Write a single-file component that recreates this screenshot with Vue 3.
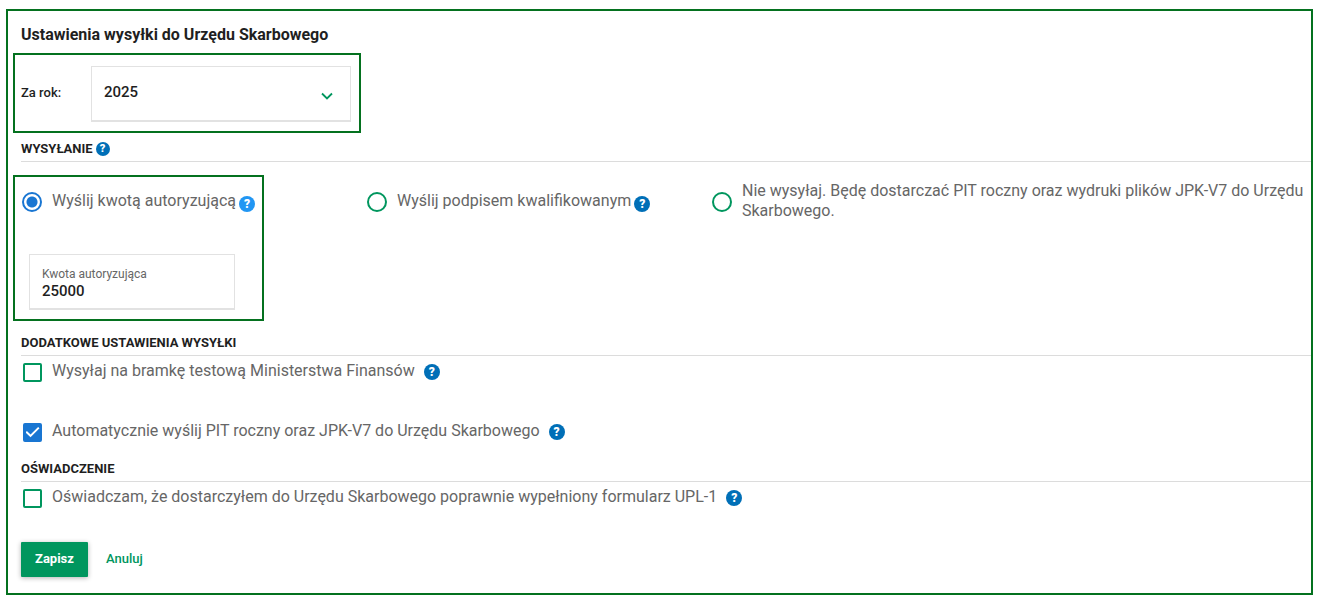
<script setup>
import { ref } from 'vue'

const year = ref('2025')
const years = ['2025', '2024', '2023']
const method = ref('amount')
const amount = ref('25000')
const testGate = ref(false)
const autoSend = ref(true)
const statement = ref(false)
</script>

<template>
  <form class="panel" @submit.prevent>
    <h1 class="title">Ustawienia wysyłki do Urzędu Skarbowego</h1>

    <div class="year framed">
      <label class="year-label" for="year">Za rok:</label>
      <div class="select-wrap">
        <select id="year" v-model="year" class="select">
          <option v-for="y in years" :key="y">{{ y }}</option>
        </select>
        <svg class="chevron" viewBox="0 0 12 8" aria-hidden="true"><path d="M1 1.5l5 5 5-5" fill="none" stroke="#00965e" stroke-width="1.8" /></svg>
      </div>
    </div>

    <h2 class="section">
      WYSYŁANIE
      <button type="button" class="help small" aria-label="Pomoc"><b>?</b></button>
    </h2>

    <div class="methods">
      <div class="method framed">
        <div class="option">
          <input id="m1" v-model="method" class="radio" type="radio" name="method" value="amount" />
          <label for="m1">Wyślij kwotą autoryzującą</label>
          <button type="button" class="help lower light" aria-label="Pomoc"><b>?</b></button>
        </div>
        <div class="field">
          <label class="field-label" for="amount">Kwota autoryzująca</label>
          <input id="amount" v-model="amount" class="field-input" type="text" />
        </div>
      </div>
      <div class="method">
        <div class="option">
          <input id="m2" v-model="method" class="radio" type="radio" name="method" value="signature" />
          <label for="m2">Wyślij podpisem kwalifikowanym</label>
          <button type="button" class="help lower" aria-label="Pomoc"><b>?</b></button>
        </div>
      </div>
      <div class="method">
        <div class="option">
          <input id="m3" v-model="method" class="radio" type="radio" name="method" value="none" />
          <label for="m3">Nie wysyłaj. Będę dostarczać PIT roczny oraz wydruki plików JPK-V7 do Urzędu Skarbowego.</label>
        </div>
      </div>
    </div>

    <h2 class="section spaced">DODATKOWE USTAWIENIA WYSYŁKI</h2>
    <div class="checks">
      <div class="check-row">
        <input id="c1" v-model="testGate" class="check" type="checkbox" />
        <label for="c1">Wysyłaj na bramkę testową Ministerstwa Finansów</label>
        <button type="button" class="help" aria-label="Pomoc"><b>?</b></button>
      </div>
      <div class="check-row">
        <input id="c2" v-model="autoSend" class="check" type="checkbox" />
        <label for="c2">Automatycznie wyślij PIT roczny oraz JPK-V7 do Urzędu Skarbowego</label>
        <button type="button" class="help" aria-label="Pomoc"><b>?</b></button>
      </div>
    </div>

    <h2 class="section spaced">OŚWIADCZENIE</h2>
    <div class="checks">
      <div class="check-row">
        <input id="c3" v-model="statement" class="check" type="checkbox" />
        <label for="c3">Oświadczam, że dostarczyłem do Urzędu Skarbowego poprawnie wypełniony formularz UPL-1</label>
        <button type="button" class="help" aria-label="Pomoc"><b>?</b></button>
      </div>
    </div>

    <div class="actions">
      <button type="submit" class="save">Zapisz</button>
      <button type="button" class="cancel">Anuluj</button>
    </div>
  </form>
</template>

<style>
body {
  margin: 0;
  background: #fff;
}
#app {
  display: flow-root;
}
</style>

<style scoped>
* {
  box-sizing: border-box;
}
.panel {
  margin: 9px 7px 7px 6px;
  padding: 14px 0 16px 5px;
  border: 2px solid #04711f;
  font-family: Roboto, "Liberation Sans", sans-serif;
  font-size: 16px;
  line-height: 20px;
  color: #1f1f1f;
}
button,
input,
select {
  font-family: inherit;
}
.title {
  margin: 0 0 8px 8px;
  font-size: 16px;
  font-weight: 700;
}
.framed {
  border: 2px solid #04711f;
}
.year {
  display: flex;
  align-items: center;
  width: fit-content;
  height: 80px;
  padding: 1px 8px 0 6px;
}
.year-label {
  width: 70px;
  padding-bottom: 2px;
  font-size: 13px;
  font-weight: 500;
}
.select-wrap {
  position: relative;
  width: 260px;
}
.select {
  display: block;
  appearance: none;
  width: 100%;
  height: 56px;
  padding: 0 40px 2px 12px;
  border: 1px solid #e2e2e2;
  border-bottom-width: 2px;
  border-radius: 0;
  background: #fff;
  color: #1f1f1f;
  font-size: 15px;
  font-weight: 500;
}
.chevron {
  position: absolute;
  right: 18px;
  top: 26px;
  width: 12px;
  height: 8px;
  pointer-events: none;
}
.section {
  display: flex;
  align-items: center;
  gap: 3px;
  margin: 0 0 0 8px;
  padding: 6px 0 2px;
  border-bottom: 1px solid #dcdcdc;
  font-size: 13px;
  font-weight: 700;
}
.help {
  flex: none;
  display: flex;
  align-items: center;
  justify-content: center;
  width: 16px;
  height: 16px;
  padding: 0;
  border: 0;
  border-radius: 50%;
  background: #006fb7;
  color: #fff;
  font-size: 12px;
  line-height: 16px;
}
.help b {
  font-weight: 900;
}
.help.small {
  width: 14px;
  height: 14px;
  font-size: 11px;
  line-height: 14px;
}
.help.light {
  background: #2196f3;
}
.help.lower {
  margin: 4px 0 0 -7px;
}
.methods {
  display: grid;
  grid-template-columns: 345px 345px 1fr;
  align-items: start;
  margin-top: 13px;
  padding-bottom: 1px;
}
.method {
  padding: 2px;
}
.method.framed {
  width: 251px;
  padding: 0 0 9px;
}
.option {
  display: flex;
  align-items: center;
  gap: 10px;
  height: 50px;
  padding-left: 7px;
  color: #666;
}
.option label,
.check-row label {
  padding-bottom: 2px;
}
.framed .option label {
  white-space: nowrap;
}
.radio {
  flex: none;
  appearance: none;
  width: 20px;
  height: 20px;
  margin: 0;
  border: 2px solid #00965e;
  border-radius: 50%;
  background: #fff;
}
.radio:checked {
  border-color: #1976d2;
  background: radial-gradient(circle, #1976d2 5px, #fff 6px);
}
.field {
  display: flex;
  flex-direction: column;
  width: 206px;
  height: 56px;
  margin: 27px 0 0 14px;
  padding: 12px 12px 0;
  border: 1px solid #e2e2e2;
  border-bottom-width: 2px;
}
.field-label {
  font-size: 12px;
  line-height: 14px;
  color: #666;
}
.field-input {
  width: 100%;
  height: 20px;
  padding: 0;
  border: 0;
  outline: 0;
  background: none;
  color: #1f1f1f;
  font-size: 15px;
  font-weight: 500;
}
.section.spaced {
  margin-top: 5px;
}
.checks {
  display: flex;
  flex-direction: column;
  gap: 28px;
  padding-left: 10px;
}
.check-row {
  display: flex;
  align-items: center;
  gap: 10px;
  height: 32px;
  color: #666;
}
.check-row .help {
  margin-left: -1px;
}
.check {
  flex: none;
  appearance: none;
  display: grid;
  place-items: center;
  width: 19px;
  height: 19px;
  margin: 0;
  border: 2px solid #00965e;
  border-radius: 2px;
  background: #fff;
}
.check:checked {
  border-color: #1976d2;
  background: #1976d2;
}
.check:checked::after {
  content: "";
  width: 14px;
  height: 11px;
  background: #fff;
  clip-path: polygon(0 55%, 10% 42%, 36% 72%, 90% 4%, 100% 17%, 36% 98%);
}
.actions {
  display: flex;
  gap: 18px;
  margin: 28px 0 0 8px;
}
.save,
.cancel {
  height: 35px;
  padding: 0 14px 2px;
  border: 0;
  font-size: 13px;
  font-weight: 500;
}
.save {
  border-radius: 1px;
  background: #00965e;
  box-shadow: 0 1px 5px rgba(0, 0, 0, 0.3);
  color: #fff;
  font-weight: 700;
}
.cancel {
  padding: 0 0 2px;
  background: none;
  color: #00965e;
}
</style>
